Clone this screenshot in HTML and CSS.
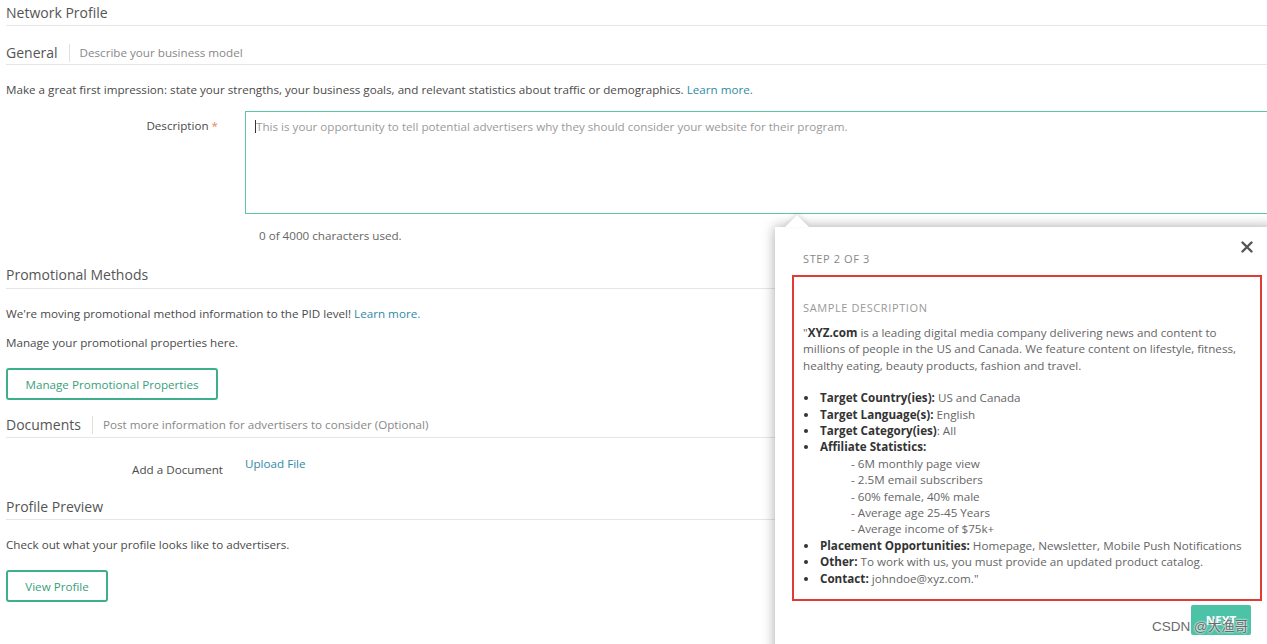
FILE: index.html
```html
<!DOCTYPE html>
<html>
<head>
  <meta charset="utf-8">
  <title>Network Profile</title>
  <link rel="stylesheet" href="styles.css">
</head>
<body>
  <div class="page">
    <h2 class="page_title">Network Profile</h2>

    <div class="section_head">
      <h3>General</h3>
      <span class="section_sub">Describe your business model</span>
    </div>
    <p class="intro">Make a great first impression: state your strengths, your business goals, and relevant statistics about traffic or demographics. <a href="#">Learn more.</a></p>
    <div class="field">
      <label class="field_label desc_label">Description <span class="req">*</span></label>
      <div class="field_body">
        <div class="textarea"><span class="caret"></span>This is your opportunity to tell potential advertisers why they should consider your website for their program.</div>
        <div class="counter">0 of 4000 characters used.</div>
      </div>
    </div>

    <div class="section_head plain head_promo">
      <h3>Promotional Methods</h3>
    </div>
    <p class="intro">We're moving promotional method information to the PID level! <a href="#">Learn more.</a></p>
    <p class="intro tight">Manage your promotional properties here.</p>
    <button class="btn_outline btn_manage">Manage Promotional Properties</button>

    <div class="section_head head_docs">
      <h3>Documents</h3>
      <span class="section_sub">Post more information for advertisers to consider (Optional)</span>
    </div>
    <div class="field doc_field">
      <label class="field_label doc_label">Add a Document</label>
      <div class="field_body"><a href="#" class="upload">Upload File</a></div>
    </div>

    <div class="section_head plain head_preview">
      <h3>Profile Preview</h3>
    </div>
    <p class="intro">Check out what your profile looks like to advertisers.</p>
    <button class="btn_outline btn_view">View Profile</button>
  </div>

  <div class="popover">
    <button class="pop_close" aria-label="Close">
      <svg width="12" height="12" viewBox="0 0 12 12"><path d="M1.5 1.5 L10.5 10.5 M10.5 1.5 L1.5 10.5" stroke="#555" stroke-width="2.4" stroke-linecap="round"/></svg>
    </button>
    <div class="pop_step">STEP 2 OF 3</div>
    <div class="sample">
      <div class="sample_title">SAMPLE DESCRIPTION</div>
      <p class="sample_text">"<b>XYZ.com</b> is a leading digital media company delivering news and content to millions of people in the US and Canada. We feature content on lifestyle, fitness, healthy eating, beauty products, fashion and travel.</p>
      <ul class="sample_list">
        <li><b>Target Country(ies):</b> US and Canada</li>
        <li><b>Target Language(s):</b> English</li>
        <li><b>Target Category(ies)</b>: All</li>
        <li><b>Affiliate Statistics:</b>
          <div class="stat">- 6M monthly page view</div>
          <div class="stat">- 2.5M email subscribers</div>
          <div class="stat">- 60% female, 40% male</div>
          <div class="stat">- Average age 25-45 Years</div>
          <div class="stat">- Average income of $75k+</div>
        </li>
        <li><b>Placement Opportunities:</b> Homepage, Newsletter, Mobile Push Notifications</li>
        <li><b>Other:</b> To work with us, you must provide an updated product catalog.</li>
        <li><b>Contact:</b> johndoe@xyz.com."</li>
      </ul>
    </div>
    <div class="pop_foot">
      <button class="btn_next">NEXT</button>
    </div>
  </div>

  <span class="watermark">CSDN @大渔哥</span>
</body>
</html>
```

FILE: styles.css
```css
html, body {
  margin: 0;
  padding: 0;
  background: #fff;
}
body {
  font-family: "Open Sans", "Noto Sans CJK SC", sans-serif;
  font-size: 11.65px;
  color: #4a4a4a;
  width: 1267px;
  height: 644px;
  overflow: hidden;
  position: relative;
}
a {
  color: #2e8ba6;
  text-decoration: none;
}

.page {
  padding-left: 6px;
}
.page_title {
  margin: 0;
  font-size: 14px;
  font-weight: normal;
  line-height: 20px;
  color: #555;
  padding: 3px 0 2px;
  border-bottom: 1px solid #e6e6e6;
}

.section_head {
  display: flex;
  align-items: center;
  margin-top: 17px;
  padding-bottom: 1px;
  border-bottom: 1px solid #e6e6e6;
}
.section_head h3 {
  margin: 0;
  font-size: 14px;
  font-weight: normal;
  line-height: 20px;
  color: #555;
  padding-right: 11px;
}
.section_sub {
  border-left: 1px solid #e0e0e0;
  padding-left: 10px;
  line-height: 18px;
  color: #888;
}
.head_promo {
  margin-top: 21px;
  padding-bottom: 3px;
}
.head_docs {
  margin-top: 15px;
  padding-bottom: 2px;
}
.head_preview {
  margin-top: 19px;
  padding-bottom: 2px;
}

.intro {
  margin: 17px 0 0;
  line-height: 16px;
  color: #4a4a4a;
}
.intro.tight {
  margin-top: 13px;
}

.field {
  display: flex;
  margin-top: 13px;
}
.field_label {
  width: 217px;
  flex: none;
  text-align: right;
  line-height: 16px;
  padding-top: 7px;
  color: #4a4a4a;
}
.desc_label {
  padding-right: 5px;
  box-sizing: border-box;
}
.req {
  color: #e8875a;
}
.field_body {
  flex: 1;
  margin-left: 22px;
  min-width: 0;
}
.textarea {
  border: 1px solid #5cc8a0;
  border-right: none;
  margin-right: -20px;
  padding: 7px 9px 0;
  line-height: 16px;
  color: #9a9a9a;
  box-sizing: border-box;
  height: 103px;
}
.caret {
  display: inline-block;
  width: 1px;
  height: 13px;
  background: #333;
  vertical-align: -2px;
}
.counter {
  margin-top: 14px;
  padding-left: 14px;
  line-height: 16px;
  color: #666;
}

.btn_outline {
  display: block;
  margin-top: 17px;
  height: 32px;
  padding: 0;
  border: 2px solid #3fae8c;
  border-radius: 3px;
  background: #fff;
  font-family: inherit;
  font-size: 11.65px;
  color: #3a9e7c;
}
.btn_manage {
  width: 212px;
}
.btn_view {
  width: 102px;
}

.doc_field {
  margin-top: 18px;
}
.doc_label {
  padding-top: 6px;
}
.upload {
  display: block;
  line-height: 16px;
}

.popover {
  position: absolute;
  left: 775px;
  top: 227px;
  width: 500px;
  height: 440px;
  background: #fff;
  box-shadow: 0 0 12px rgba(0, 0, 0, 0.35);
  padding: 24px 0 0 17px;
  box-sizing: border-box;
}
.popover::before {
  content: "";
  position: absolute;
  left: 10px;
  top: -12px;
  border-left: 12px solid transparent;
  border-right: 12px solid transparent;
  border-bottom: 12px solid #fff;
  filter: drop-shadow(0 -2px 2px rgba(0, 0, 0, 0.12));
}
.pop_close {
  position: absolute;
  right: 22px;
  top: 14px;
  border: 0;
  background: none;
  padding: 0;
  width: 12px;
  height: 12px;
}
.pop_step {
  margin-left: 11px;
  line-height: 16px;
  font-size: 11px;
  letter-spacing: 0.6px;
  color: #888;
}
.sample {
  width: 470px;
  box-sizing: border-box;
  margin-top: 8px;
  border: 2px solid #e23a35;
  padding: 23px 12px 12px 9px;
  color: #666;
  line-height: 16.4px;
}
.sample_title {
  line-height: 16px;
  font-size: 11px;
  letter-spacing: 0.6px;
  color: #999;
}
.sample_text {
  margin: 9px 0 0;
}
.sample_text b,
.sample_list b {
  color: #333;
}
.sample_list {
  list-style: none;
  margin: 16px 0 0;
  padding: 0 0 0 17px;
}
.sample_list li {
  position: relative;
}
.sample_list li::before {
  content: "";
  position: absolute;
  left: -16px;
  top: 6px;
  width: 4px;
  height: 4px;
  border-radius: 50%;
  background: #333;
}
.stat {
  padding-left: 31px;
}
.pop_foot {
  display: flex;
  justify-content: flex-end;
  width: 459px;
  margin-top: 4px;
}
.btn_next {
  width: 60px;
  height: 30px;
  border: 0;
  border-radius: 2px;
  background: #4cc2a7;
  color: #fff;
  font-family: inherit;
  font-weight: bold;
  font-size: 11.65px;
}

.watermark {
  position: absolute;
  left: 1152px;
  top: 618px;
  font-family: "Liberation Sans", "Noto Sans CJK SC", sans-serif;
  font-size: 13.5px;
  line-height: 18px;
  color: #6b6b6b;
  text-shadow: 0 0 2px #fff, 0 0 2px #fff;
}
```
